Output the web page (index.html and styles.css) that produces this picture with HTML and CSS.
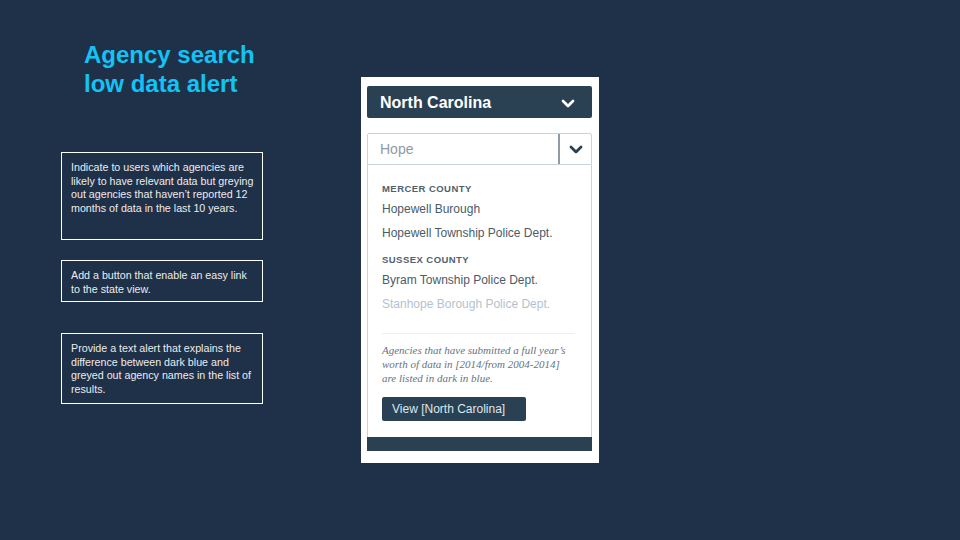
FILE: index.html
```html
<!DOCTYPE html>
<html>
<head>
<meta charset="utf-8">
<link rel="stylesheet" href="styles.css">
</head>
<body>
<div class="slide">
  <div class="left">
    <h1 class="title">Agency search<br>low data alert</h1>
    <div class="note note1">Indicate to users which agencies are likely to have relevant data but greying out agencies that haven’t reported 12 months of data in the last 10 years.</div>
    <div class="note note2">Add a button that enable an easy link to the state view.</div>
    <div class="note note3">Provide a text alert that explains the difference between dark blue and greyed out agency names in the list of results.</div>
  </div>
  <div class="panel">
    <div class="state">
      <span>North Carolina</span>
      <svg class="chev" width="14" height="10" viewBox="0 0 14 10"><path d="M2 2 L7 7 L12 2" fill="none" stroke="#fff" stroke-width="2.8" stroke-linecap="round" stroke-linejoin="round"/></svg>
    </div>
    <div class="search">
      <div class="query">Hope</div>
      <div class="toggle"><svg width="14" height="10" viewBox="0 0 14 10"><path d="M2 2 L7 7 L12 2" fill="none" stroke="#2a4153" stroke-width="2.8" stroke-linecap="round" stroke-linejoin="round"/></svg></div>
    </div>
    <div class="results">
      <div class="group">MERCER COUNTY</div>
      <div class="item first">Hopewell Burough</div>
      <div class="item">Hopewell Township Police Dept.</div>
      <div class="group second">SUSSEX COUNTY</div>
      <div class="item first">Byram Township Police Dept.</div>
      <div class="item muted">Stanhope Borough Police Dept.</div>
      <div class="divider"></div>
      <p class="hint">Agencies that have submitted a full year’s worth of data in [2014/from 2004-2014] are listed in dark in blue.</p>
      <div class="btn">View [North Carolina]</div>
      <div class="footer-bar"></div>
    </div>
  </div>
</div>
</body>
</html>
```
FILE: styles.css
```css
html, body {
  margin: 0;
  padding: 0;
}
body {
  width: 960px;
  height: 540px;
  background: #1f3049;
  font-family: "Liberation Sans", Arial, sans-serif;
  overflow: hidden;
}
.slide {
  display: flex;
  align-items: flex-start;
}
.left {
  margin-left: 61px;
  width: 202px;
  display: flex;
  flex-direction: column;
}
.title {
  margin: 40px 0 0 23px;
  font-size: 24px;
  line-height: 29px;
  font-weight: bold;
  color: #12c3f5;
}
.note {
  border: 1px solid #ffffff;
  color: #ececec;
  font-size: 10.7px;
  line-height: 13.5px;
  padding: 8px 4px 0 9px;
  box-sizing: border-box;
}
.note1 {
  margin-top: 54px;
  height: 88px;
}
.note2 {
  margin-top: 20px;
  height: 42px;
}
.note3 {
  margin-top: 31px;
  height: 71px;
}
.panel {
  margin-left: 98px;
  margin-top: 77px;
  width: 238px;
  height: 386px;
  background: #ffffff;
  box-sizing: border-box;
  padding: 9px 7px 0 6px;
}
.state {
  height: 32px;
  background: #2a4153;
  border-radius: 2px;
  display: flex;
  align-items: center;
  justify-content: space-between;
  padding: 1px 17px 0 13px;
  box-sizing: border-box;
  color: #ffffff;
  font-weight: bold;
  font-size: 16px;
}
.state .chev {
  margin-top: 2px;
}
.search {
  margin-top: 15px;
  height: 32px;
  border: 1px solid #c9d3dc;
  border-radius: 2px 2px 0 0;
  box-sizing: border-box;
  display: flex;
}
.query {
  flex: 1;
  display: flex;
  align-items: center;
  padding-left: 12px;
  font-size: 14px;
  color: #8e9aa5;
  border-right: 2px solid #8f9ca8;
}
.toggle {
  width: 31px;
  display: flex;
  align-items: center;
  justify-content: center;
}
.toggle svg {
  margin-top: 2px;
}
.results {
  border-left: 1px solid #c9d3dc;
  border-right: 1px solid #c9d3dc;
  padding: 18px 16px 0 14px;
  height: 286px;
  box-sizing: border-box;
  display: flex;
  flex-direction: column;
}
.group {
  font-size: 9.5px;
  line-height: 12px;
  font-weight: bold;
  color: #4f616f;
  letter-spacing: 0.45px;
}
.group.second {
  margin-top: 9px;
}
.item {
  font-size: 12px;
  line-height: 24px;
  color: #4a5b69;
}
.item.first {
  margin-top: 2px;
}
.item.muted {
  color: #b3c2d0;
}
.divider {
  margin-top: 17px;
  height: 1px;
  background: #edf0f3;
}
.hint {
  margin: 9px 0 0 0;
  font-family: "Liberation Serif", Georgia, serif;
  font-style: italic;
  font-size: 11px;
  line-height: 14px;
  color: #65747f;
}
.btn {
  margin-top: 12px;
  width: 144px;
  height: 24px;
  box-sizing: border-box;
  background: #2a4153;
  border-radius: 2px;
  color: #dfe6ec;
  font-size: 12px;
  line-height: 24px;
  padding-left: 10px;
}
.footer-bar {
  margin-top: auto;
  margin-left: -15px;
  margin-right: -17px;
  height: 14px;
  background: #2a4153;
}
```
